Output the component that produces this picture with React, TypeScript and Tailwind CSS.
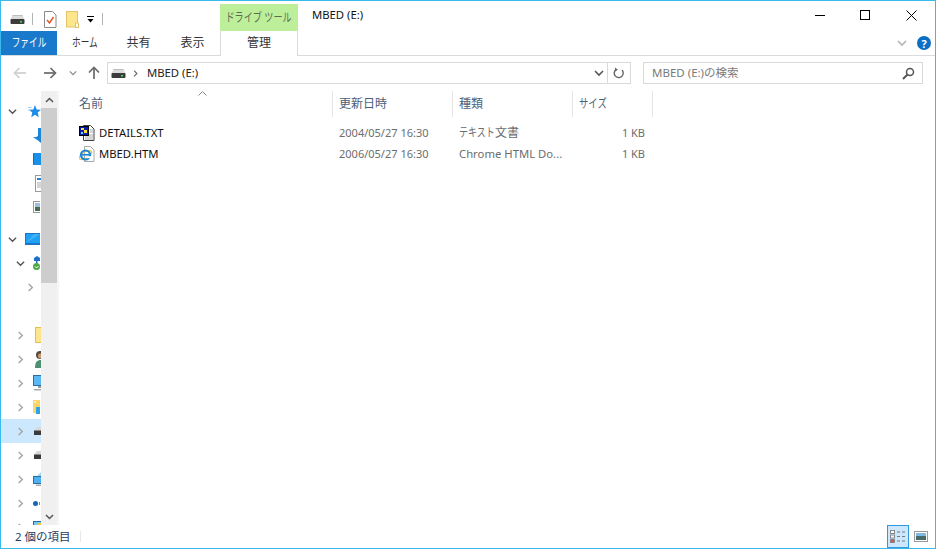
import React from "react";

const font = { fontFamily: '"Noto Sans","Noto Sans CJK JP",sans-serif' };

function Drive({ className = "" }: { className?: string }) {
  return (
    <svg width="15" height="9" viewBox="0 0 15 9" className={className}>
      <path d="M2.500 0h10L14.500 4.500H0.500z" fill="#dcdcdc" />
      <path d="M2.500 0.500h10" stroke="#bdbdbd" />
      <rect x="0.500" y="4" width="14" height="5" rx="1" fill="#3c3c3c" />
      <rect x="10" y="6" width="2" height="1.500" fill="#3fdc5a" />
    </svg>
  );
}

function Chevron({ dir, color = "#666", size = 9 }: { dir: "down" | "right"; color?: string; size?: number }) {
  return (
    <svg width={size} height={size} viewBox="0 0 10 10" className="shrink-0">
      {dir === "down" ? (
        <path d="M1 3l4 4 4-4" fill="none" stroke={color} strokeWidth="1.600" />
      ) : (
        <path d="M3 1l4 4-4 4" fill="none" stroke={color} strokeWidth="1.600" />
      )}
    </svg>
  );
}

function Sep() {
  return <div className="w-px h-[12px] bg-[#b4b4b4]" />;
}

function ArrowIcon({ dir, color }: { dir: "left" | "right" | "up"; color: string }) {
  const rot = dir === "left" ? "rotate(180 7 7)" : dir === "up" ? "rotate(-90 7 7)" : "";
  return (
    <svg width="14" height="14" viewBox="0 0 14 14" className="shrink-0">
      <g transform={rot} fill="none" stroke={color} strokeWidth="1.700">
        <path d="M1 7h11.500" />
        <path d="M7.500 2l5 5-5 5" />
      </g>
    </svg>
  );
}

const icons: Record<string, React.ReactNode> = {
  star: (
    <svg width="13" height="13" viewBox="0 0 13 13">
      <path d="M7 0l1.700 4.400 4.300.3-3.300 2.900 1.100 4.600L7 9.700l-3.800 2.500 1.100-4.600L1 4.700l4.300-.3z" fill="#1e8ce8" />
      <path d="M0 2.500h3.500M0 5h2" stroke="#9fd0f5" strokeWidth="1" />
    </svg>
  ),
  pin: (
    <svg width="8" height="15" viewBox="0 0 8 15">
      <path d="M8 0v15L5 12.500 0 9h3.500L5 7.500V0z" fill="#1e84d8" />
    </svg>
  ),
  blue: <div className="w-[8px] h-[12px] bg-[#1a8fe8] rounded-l-[1px] border-l border-[#0f6dbb]" />,
  doc: (
    <svg width="6" height="17" viewBox="0 0 6 17">
      <rect x="0.500" y="0.500" width="8" height="16" fill="#fff" stroke="#9a9a9a" />
      <path d="M2 4h4" stroke="#2a7fd0" strokeWidth="2" />
      <path d="M2 8h4M2 10h4M2 12h4" stroke="#aaa" />
    </svg>
  ),
  pic: (
    <svg width="7" height="12" viewBox="0 0 7 12">
      <rect x="0.500" y="0.500" width="9" height="11" fill="#fff" stroke="#999" />
      <rect x="2" y="2" width="5" height="4" fill="#9cc0de" />
      <rect x="2" y="6" width="5" height="4" fill="#4a6a52" />
    </svg>
  ),
  pc: (
    <svg width="15" height="12" viewBox="0 0 15 12">
      <rect x="0" y="0" width="15" height="12" fill="#1976c8" />
      <rect x="1" y="1" width="14" height="9" fill="#1fa0f5" />
      <path d="M1 10l8-9h6z" fill="#43b2f7" />
    </svg>
  ),
  net: (
    <svg width="7" height="14" viewBox="0 0 7 14">
      <path d="M1 2l3-2 3 2v3H1z" fill="#1e6fc8" />
      <rect x="3" y="5" width="1.500" height="2" fill="#1e6fc8" />
      <circle cx="3.500" cy="10.500" r="3.500" fill="#4ea84a" />
      <path d="M2 10.500l1.500 1.500 2-2" stroke="#fff" fill="none" />
    </svg>
  ),
  folder: <div className="w-[6px] h-[16px] bg-[#fde58c] border border-r-0 border-[#e2bf52]" />,
  person: (
    <svg width="6" height="17" viewBox="0 0 6 17">
      <circle cx="5" cy="4" r="4" fill="#5c4a3a" />
      <circle cx="5.500" cy="5" r="2.500" fill="#c79a78" />
      <path d="M0 17c0-6 2-8 6-8v8z" fill="#4d8f70" />
    </svg>
  ),
  monitor: (
    <svg width="8" height="16" viewBox="0 0 8 16">
      <rect x="0.500" y="0.500" width="9" height="10" fill="#5ab8f5" stroke="#2a6ea8" />
      <rect x="5" y="11" width="3" height="2" fill="#999" />
      <rect x="1" y="14" width="7" height="1.500" fill="#aaa" />
    </svg>
  ),
  lib: (
    <svg width="7" height="14" viewBox="0 0 7 14">
      <rect x="0" y="0" width="7" height="13" fill="#fcd767" />
      <rect x="1" y="1.500" width="2" height="1" fill="#fff" />
      <rect x="3" y="7" width="4" height="7" fill="#2ea3e6" />
    </svg>
  ),
  drive: (
    <svg width="7" height="8" viewBox="0 0 7 8">
      <path d="M3 0h4v4H0z" fill="#d8d8d8" />
      <rect x="0" y="3.500" width="7" height="4.500" fill="#3a3a3a" />
    </svg>
  ),
  netpc: (
    <svg width="8" height="14" viewBox="0 0 8 14">
      <path d="M4 4l4-4v6z" fill="#a8d4ee" />
      <rect x="0.500" y="4.500" width="9" height="7" fill="#4fb0ef" stroke="#2a6ea8" />
      <rect x="3" y="12.500" width="5" height="1.500" fill="#aaa" />
    </svg>
  ),
  dots: (
    <svg width="7" height="7" viewBox="0 0 7 7">
      <circle cx="2.500" cy="3.500" r="2.500" fill="#1565b8" />
      <rect x="6" y="2" width="1" height="3" fill="#5aa85a" />
    </svg>
  ),
  last: (
    <svg width="8" height="12" viewBox="0 0 8 12">
      <rect x="0.500" y="0.500" width="9" height="10" fill="#7cc4f2" stroke="#2a6ea8" />
      <rect x="5" y="2" width="3" height="2" fill="#f2c744" />
    </svg>
  ),
};

function NavRow({
  chevron,
  pad,
  iconBox,
  icon,
  selected,
  gray,
}: {
  chevron?: "down" | "right";
  pad: string;
  iconBox: string;
  icon?: string;
  selected?: boolean;
  gray?: boolean;
}) {
  return (
    <div className={`h-6 flex items-center shrink-0 ${pad} ${selected ? "bg-[#cce8ff]" : ""}`}>
      <div className={`${iconBox} flex shrink-0 items-center`}>
        {chevron && <Chevron dir={chevron} color={gray ? "#a6a6a6" : "#555"} />}
      </div>
      {icon && <div className="shrink-0">{icons[icon]}</div>}
    </div>
  );
}

function HeaderCell({ w, children }: { w: string; children?: React.ReactNode }) {
  return (
    <div className={`${w} h-full border-r border-[#e5e5e5] pl-[6px] flex items-center text-[12px] text-[#4c607a]`}>
      {children}
    </div>
  );
}

function FileRow({
  icon,
  name,
  date,
  type,
}: {
  icon: React.ReactNode;
  name: string;
  date: string;
  type: React.ReactNode;
}) {
  return (
    <div className="h-[21px] flex items-center leading-none">
      <div className="w-[259px] flex items-center pl-[6px] text-[11.3px] text-[#111]">
        <div className="w-[20px] h-[16px] shrink-0">{icon}</div>
        <span>{name}</span>
      </div>
      <div className="w-[120px] pl-[7px] text-[11px] text-[#6d6d6d]">{date}</div>
      <div className="w-[120px] pl-[7px] text-[11.3px] text-[#6d6d6d] whitespace-nowrap flex">{type}</div>
      <div className="w-[81px] pr-[8px] text-right text-[11px] text-[#6d6d6d]">1 KB</div>
    </div>
  );
}

export default function App() {
  return (
    <div
      className="w-[936px] h-[549px] bg-white border border-[#3bb9ea] flex flex-col overflow-hidden text-[#222]"
      style={font}
    >
      {/* title bar */}
      <div className="h-[30px] flex shrink-0">
        <div className="w-[219px] flex items-center pt-[6px] pl-[9px]">
          <Drive />
          <div className="ml-[7px]"><Sep /></div>
          <svg width="13" height="17" viewBox="0 0 13 17" className="ml-[11px]">
            <path d="M0.500 0.500h8l3.500 3.500v12.500h-11.500z" fill="#fff" stroke="#8a8a8a" />
            <path d="M3 9l2.500 3L9.500 6" fill="none" stroke="#e8582a" strokeWidth="1.500" />
          </svg>
          <svg width="13" height="17" viewBox="0 0 13 17" className="ml-[9px]">
            <rect x="0.500" y="0.500" width="11" height="15.500" fill="#fde58c" stroke="#e2c56a" />
            <rect x="9.500" y="12" width="3" height="4.500" fill="#fff" stroke="#e2c56a" />
          </svg>
          <svg width="7" height="7" viewBox="0 0 7 7" className="ml-[8px]">
            <rect x="0" y="0" width="7" height="1" fill="#000" />
            <path d="M0.500 3h6L3.500 6.500z" fill="#000" />
          </svg>
          <div className="ml-[8px]"><Sep /></div>
        </div>
        <div className="mt-[3px] w-[78px] h-[27px] bg-[#bdef9a] flex items-center justify-center pt-[1px] text-[12px] text-[#5a6b52] whitespace-nowrap">
          <span className="inline-block scale-x-[0.76]">ドライブ ツール</span>
        </div>
        <div className="ml-[14px] mt-[4px] h-[20px] flex items-center text-[11.3px] text-[#111] leading-none">MBED (E:)</div>
        <div className="ml-auto flex h-full items-start pt-[9px] pr-[18px]">
          <svg width="11" height="11" viewBox="0 0 11 11">
            <path d="M0 5.500h10" stroke="#000" />
          </svg>
          <svg width="11" height="11" viewBox="0 0 11 11" className="ml-[34px]">
            <rect x="0.500" y="0.500" width="9" height="9" fill="none" stroke="#000" />
          </svg>
          <svg width="11" height="11" viewBox="0 0 11 11" className="ml-[35px]">
            <path d="M0.500 0.500l10 10M10.500 0.500l-10 10" stroke="#000" />
          </svg>
        </div>
      </div>

      {/* ribbon tabs */}
      <div className="h-[25px] flex shrink-0 border-b border-[#dadbdc] text-[12px] leading-none text-[#333]">
        <div className="w-[56px] h-[24px] bg-[#1979ca] text-white flex items-center justify-center">
          <span className="inline-block scale-x-[0.72]">ファイル</span>
        </div>
        <div className="w-[55px] h-[24px] flex items-center justify-center">
          <span className="inline-block scale-x-[0.72]">ホーム</span>
        </div>
        <div className="w-[53px] h-[24px] flex items-center justify-center">共有</div>
        <div className="w-[55px] h-[24px] flex items-center justify-center">表示</div>
        <div className="w-[78px] h-[25px] pb-[2px] bg-white border-x border-[#dadbdc] flex items-center justify-center -mb-px">管理</div>
        <div className="ml-auto flex items-center pr-[4px]">
          <Chevron dir="down" color="#b4b4b4" size={10} />
          <div className="ml-[10px] w-[14px] h-[14px] rounded-full bg-[#0a6fc4] text-white text-[11px] font-bold flex items-center justify-center">?</div>
        </div>
      </div>

      {/* address bar */}
      <div className="h-[35px] flex items-start shrink-0 pl-[12px] pt-[6px]">
        <div className="pt-[4px]"><ArrowIcon dir="left" color="#cfcfcf" /></div>
        <div className="ml-[16px] pt-[4px]"><ArrowIcon dir="right" color="#6a6a6a" /></div>
        <div className="ml-[12px] flex pt-[7px]"><Chevron dir="down" color="#8a8a8a" size={8} /></div>
        <div className="ml-[10px] pt-[4px]"><ArrowIcon dir="up" color="#6a6a6a" /></div>
        <div className="ml-[6px] w-[524px] h-[22px] border border-[#d9d9d9] flex items-center text-[11.3px] leading-none text-[#222]">
          <Drive className="ml-[3px]" />
          <div className="ml-[6px]"><Chevron dir="right" color="#666" size={7} /></div>
          <span className="ml-[8px]">MBED (E:)</span>
          <div className="ml-auto mr-[3px]"><Chevron dir="down" color="#555" size={10} /></div>
          <div className="w-px h-full bg-[#d9d9d9]" />
          <svg width="12" height="12" viewBox="0 0 12 12" className="mx-[5px]">
            <path d="M3 2.500a4.500 4.500 0 1 0 6 .5" fill="none" stroke="#666" strokeWidth="1.400" />
            <path d="M2 0.500l3 2.200-3 1.800z" fill="#666" />
          </svg>
        </div>
        <div className="ml-[12px] w-[280px] h-[22px] border border-[#d9d9d9] flex items-center pl-[8px] pr-[7px] text-[11.5px] leading-none text-[#7a7a7a]">
          <span>MBED (E:)の検索</span>
          <svg width="13" height="13" viewBox="0 0 13 13" className="ml-auto">
            <circle cx="8" cy="5" r="3.500" fill="none" stroke="#555" strokeWidth="1.500" />
            <path d="M5.500 7.500L1 12" stroke="#555" strokeWidth="2" />
          </svg>
        </div>
      </div>

      {/* body */}
      <div className="flex-1 flex min-h-0">
        <div className="w-[40px] shrink-0 overflow-hidden flex flex-col pt-[8px] h-[434px]">
          <NavRow pad="pl-[7px]" iconBox="w-[20px]" chevron="down" icon="star" />
          <NavRow pad="pl-[7px]" iconBox="w-[25px]" icon="pin" />
          <NavRow pad="pl-[7px]" iconBox="w-[25px]" icon="blue" />
          <NavRow pad="pl-[7px]" iconBox="w-[27px]" icon="doc" />
          <NavRow pad="pl-[7px]" iconBox="w-[25px]" icon="pic" />
          <div className="h-2 shrink-0" />
          <NavRow pad="pl-[7px]" iconBox="w-[17px]" chevron="down" icon="pc" />
          <NavRow pad="pl-[15px]" iconBox="w-[17px]" chevron="down" icon="net" />
          <NavRow pad="pl-[25px]" iconBox="w-[10px]" chevron="right" gray />
          <div className="h-6 shrink-0" />
          <NavRow pad="pl-[15px]" iconBox="w-[19px]" chevron="right" gray icon="folder" />
          <NavRow pad="pl-[15px]" iconBox="w-[19px]" chevron="right" gray icon="person" />
          <NavRow pad="pl-[15px]" iconBox="w-[17px]" chevron="right" gray icon="monitor" />
          <NavRow pad="pl-[15px]" iconBox="w-[17px]" chevron="right" gray icon="lib" />
          <NavRow pad="pl-[15px]" iconBox="w-[18px]" chevron="right" gray icon="drive" selected />
          <NavRow pad="pl-[15px]" iconBox="w-[18px]" chevron="right" gray icon="drive" />
          <NavRow pad="pl-[15px]" iconBox="w-[17px]" chevron="right" gray icon="netpc" />
          <NavRow pad="pl-[15px]" iconBox="w-[17px]" chevron="right" gray icon="dots" />
          <NavRow pad="pl-[15px]" iconBox="w-[17px]" chevron="right" gray icon="last" />
        </div>
        <div className="w-[16px] shrink-0 h-[434px] bg-[#f0f0f0] flex flex-col items-center">
          <div className="h-[17px] shrink-0 flex items-center justify-center">
            <svg width="9" height="6" viewBox="0 0 9 6"><path d="M1 5l3.500-3.500L8 5" fill="none" stroke="#555" strokeWidth="1.500" /></svg>
          </div>
          <div className="w-full h-[175px] bg-[#cdcdcd]" />
          <div className="mt-auto h-[17px] shrink-0 flex items-center justify-center">
            <svg width="9" height="6" viewBox="0 0 9 6"><path d="M1 1l3.500 3.500L8 1" fill="none" stroke="#555" strokeWidth="1.500" /></svg>
          </div>
        </div>
        <div className="w-[2px] shrink-0 h-[434px] bg-[#f5f5f5]" />
        <div className="flex-1 min-w-0 flex flex-col pl-[14px]">
          <div className="relative h-[26px] flex shrink-0">
            <HeaderCell w="w-[260px]">名前</HeaderCell>
            <HeaderCell w="w-[120px]">更新日時</HeaderCell>
            <HeaderCell w="w-[120px]">種類</HeaderCell>
            <HeaderCell w="w-[80px]">
              <span className="inline-block origin-left scale-x-[0.78]">サイズ</span>
            </HeaderCell>
            <svg width="9" height="5" viewBox="0 0 9 5" className="absolute left-[125px] top-0">
              <path d="M0.500 4.500l4-4 4 4" fill="none" stroke="#8a8a8a" />
            </svg>
          </div>
          <div className="pt-[5px] flex flex-col">
            <FileRow
              name="DETAILS.TXT"
              date="2004/05/27 16:30"
              type={
                <>
                  <span className="inline-block w-[36px] text-[12px] origin-left scale-x-[0.75]">テキスト</span>
                  <span className="text-[12px]">文書</span>
                </>
              }
              icon={
                <svg width="16" height="16" viewBox="0 0 16 16">
                  <path d="M4.500 0.500h7l3.500 3.500v11.500h-10.500z" fill="#fff" stroke="#444" />
                  <path d="M11 5h3M11 7h3M6 10h8M6 12h8M6 14h8" stroke="#aaa" />
                  <rect x="0.500" y="1.500" width="9" height="9" fill="#0a1fa8" stroke="#000" />
                  <rect x="2" y="3" width="3" height="2" fill="#ffe13a" />
                  <rect x="5" y="5" width="3" height="3" fill="#ffe13a" />
                  <rect x="2" y="7" width="2" height="2" fill="#7fd0ff" />
                </svg>
              }
            />
            <FileRow
              name="MBED.HTM"
              date="2006/05/27 16:30"
              type="Chrome HTML Do..."
              icon={
                <svg width="16" height="16" viewBox="0 0 16 16">
                  <path d="M5.500 0.500h6l3.500 3.500v11.500h-9.500z" fill="#fff" stroke="#aaa" />
                  <ellipse cx="6.500" cy="9" rx="7" ry="3.200" fill="none" stroke="#f0c43a" strokeWidth="1.200" transform="rotate(-30 6.500 9)" />
                  <circle cx="6.500" cy="9" r="4.500" fill="none" stroke="#1b86d8" strokeWidth="2.200" />
                  <path d="M2.500 8.800h8" stroke="#1b86d8" strokeWidth="1.600" />
                  <rect x="7.500" y="10.200" width="5" height="2" fill="#fff" />
                </svg>
              }
            />
          </div>
        </div>
      </div>

      {/* status bar */}
      <div className="h-[23px] shrink-0 flex items-center relative text-[11.5px] leading-none text-[#1e3a5f]">
        <span className="ml-[14px]">2 個の項目</span>
        <div className="ml-[9px] w-px h-[11px] bg-[#e8e8e8]" />
        <div className="ml-auto mr-[6px] flex items-center">
          <div className="w-[22px] h-[23px] bg-[#cce8ff] border border-[#3399dd] flex items-center justify-center">
            <svg width="16" height="14" viewBox="0 0 16 14">
              <rect x="0.500" y="0.500" width="4" height="3" fill="#fff" stroke="#888" />
              <rect x="0.500" y="5" width="4" height="3" fill="#fff" stroke="#888" />
              <rect x="0.500" y="9.500" width="4" height="3" fill="#e05050" stroke="#888" />
              <path d="M7 2h3M12 2h3M7 6.500h3M12 6.500h3M7 11h3M12 11h3" stroke="#777" />
            </svg>
          </div>
          <svg width="14" height="11" viewBox="0 0 14 11" className="ml-[4px] w-[16px]">
            <rect x="0.500" y="0.500" width="13" height="10" fill="#fff" stroke="#999" />
            <rect x="2" y="2" width="10" height="3" fill="#7fb8e0" />
            <rect x="2" y="5" width="10" height="4" fill="#4a6a6a" />
          </svg>
        </div>
      </div>
    </div>
  );
}
